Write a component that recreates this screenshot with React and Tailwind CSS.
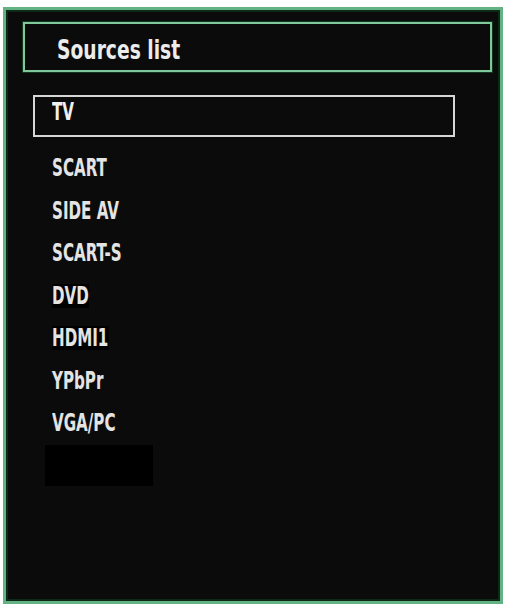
const sources = ['SCART', 'SIDE AV', 'SCART-S', 'DVD', 'HDMI1', 'YPbPr', 'VGA/PC'];

export default function App() {
  return (
    <div className="w-[507px] h-[607px] bg-white pt-[7px] pl-[3px] overflow-hidden"
      style={{ fontFamily: '"DejaVu Sans Condensed", "DejaVu Sans", sans-serif' }}>
      {/* outer frame */}
      <div className="w-[500px] h-[597px] border-[3px] border-[#62b283] bg-[#0b0b0b] shadow-[inset_0_0_0_2px_#0c2a17] pl-[17px] pt-[12px]">

        {/* title bar */}
        <div className="w-[469px] h-[50px] border-2 border-[#80c79b] shadow-[0_0_0_1px_#123820] flex items-center pl-[32px] pt-[5px]">
          <span className="inline-block origin-left scale-x-[0.77] text-[27px] font-bold text-[#ececec] leading-none whitespace-nowrap">
            Sources list
          </span>
        </div>

        {/* selected item */}
        <div className="ml-[10px] mt-[23px] w-[422px] h-[42px] border-2 border-[#d6d6d6] flex items-center pl-[17px] pb-[8px]">
          <span className="inline-block origin-left scale-x-[0.7] text-[24px] font-bold text-[#f0f0f0] leading-none">
            TV
          </span>
        </div>

        {/* other sources */}
        <div className="mt-[10px] ml-[29px] flex flex-col">
          {sources.map((s) => (
            <div key={s} className="h-[42.5px] flex items-center">
              <span className={`inline-block origin-left scale-x-[0.7] text-[24px] font-bold text-[#e4e4e4] leading-none whitespace-nowrap ${s === 'DVD' || s === 'HDMI1' ? 'bg-black' : ''}`}>
                {s}
              </span>
            </div>
          ))}
          <div className="-ml-[7px] w-[108px] h-[41px] bg-black" />
        </div>
      </div>
    </div>
  );
}
